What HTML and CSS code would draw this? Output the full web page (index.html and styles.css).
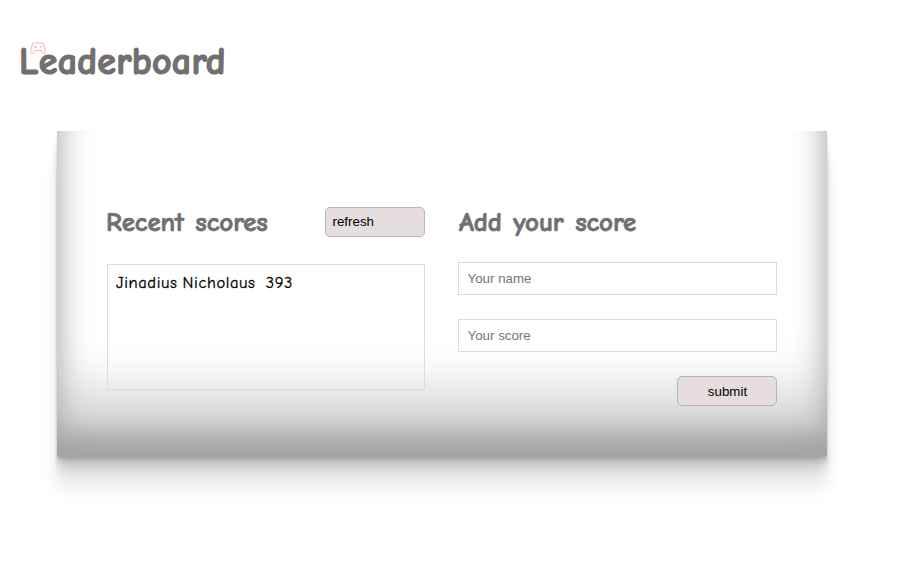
FILE: index.html
```html
<!DOCTYPE html>
<html lang="en">
<head>
<meta charset="utf-8">
<title>Leaderboard</title>
<link rel="stylesheet" href="styles.css">
</head>
<body>
<header class="header">
  <h1 class="title">Leaderboard</h1>
  <svg class="gamepad" viewBox="0 0 16 13" fill="none" stroke="#ffc0cb" stroke-width="1.2">
    <path d="M3 1.400 5 .8h6l2 .6c1.400 2.200 2.200 5.400 2.300 8.400 0 2-1.300 2.300-2.400 1L10.700 8.300H5.300L3.100 10.800C2 12.100.7 11.800.7 9.800.8 6.800 1.600 3.600 3 1.400Z"/>
    <path d="M3.800 4.800h3M5.300 3.300v3M10 4.800h2M11 3.800v2"/>
  </svg>
</header>
<main class="card">
  <section class="recent">
    <div class="bar">
      <h2 class="heading">Recent scores</h2>
      <button class="btn refresh" type="button">refresh</button>
    </div>
    <ul class="scores"><li>Jinadius Nicholaus&nbsp; 393</li></ul>
  </section>
  <section class="add">
    <h2 class="heading add-heading">Add your score</h2>
    <form class="form">
      <input class="field" type="text" placeholder="Your name">
      <input class="field" type="text" placeholder="Your score">
      <button class="btn submit" type="button">submit</button>
    </form>
  </section>
</main>
</body>
</html>
```
FILE: styles.css
```css
* { box-sizing: border-box; margin: 0; padding: 0; }
body {
  min-height: 574px;
  background: #fff;
  font-family: "Comic Sans MS", "Comic Neue", "Comic Relief", cursive;
}
.header { position: relative; height: 131px; padding: 36px 19px 0; }
.title {
  color: #726f70;
  font-size: 38px;
  line-height: 52px;
  letter-spacing: 0.25px;
  white-space: nowrap;
  -webkit-text-stroke: 1.2px #726f70;
}
.gamepad { position: absolute; left: 30px; top: 42px; width: 16px; height: 13px; }
.card {
  display: flex;
  gap: 33px;
  width: 770px;
  height: 325px;
  margin-left: 57px;
  padding: 76px 50px 0;
  box-shadow: rgba(0, 0, 0, 0.17) 0 -23px 25px 0 inset,
    rgba(0, 0, 0, 0.15) 0 -36px 40px 0 inset,
    rgba(0, 0, 0, 0.1) 0 -79px 40px 0 inset,
    rgba(0, 0, 0, 0.06) 0 2px 1px,
    rgba(0, 0, 0, 0.09) 0 4px 2px,
    rgba(0, 0, 0, 0.09) 0 8px 4px,
    rgba(0, 0, 0, 0.09) 0 16px 8px,
    rgba(0, 0, 0, 0.09) 0 32px 16px;
}
.recent { width: 318px; }
.add { width: 319px; }
.bar { display: flex; justify-content: space-between; }
.heading {
  height: 30px;
  margin-left: -1px;
  color: #726f70;
  font-size: 27px;
  line-height: 32px;
  letter-spacing: -0.1px;
  word-spacing: 2px;
  white-space: nowrap;
  -webkit-text-stroke: 0.75px #726f70;
}
.add-heading { margin-left: 1px; }
.btn {
  width: 100px;
  height: 30px;
  border: 1px solid #b9b4b5;
  border-radius: 5px;
  background: #e6dddf;
  color: #000;
  font: 13.333px "Liberation Sans", Arial, sans-serif;
}
.refresh { padding: 0 0 2px 6.500px; text-align: left; }
.submit { padding-left: 1px; }
.scores {
  height: 126px;
  margin-top: 27px;
  padding: 7px 8px;
  border: 1px solid #dcdcdc;
  list-style: none;
  font-size: 16.500px;
  line-height: 22px;
  letter-spacing: 0.6px;
  word-spacing: -1px;
  white-space: nowrap;
  -webkit-text-stroke: 0.3px #000;
}
.form { display: flex; flex-direction: column; align-items: flex-end; gap: 24px; margin-top: 25px; }
.field {
  width: 319px;
  height: 33px;
  padding: 0 8.500px;
  border: 1px solid #dcdcdc;
  background: #fff;
  font: 13.333px "Liberation Sans", Arial, sans-serif;
}
```
